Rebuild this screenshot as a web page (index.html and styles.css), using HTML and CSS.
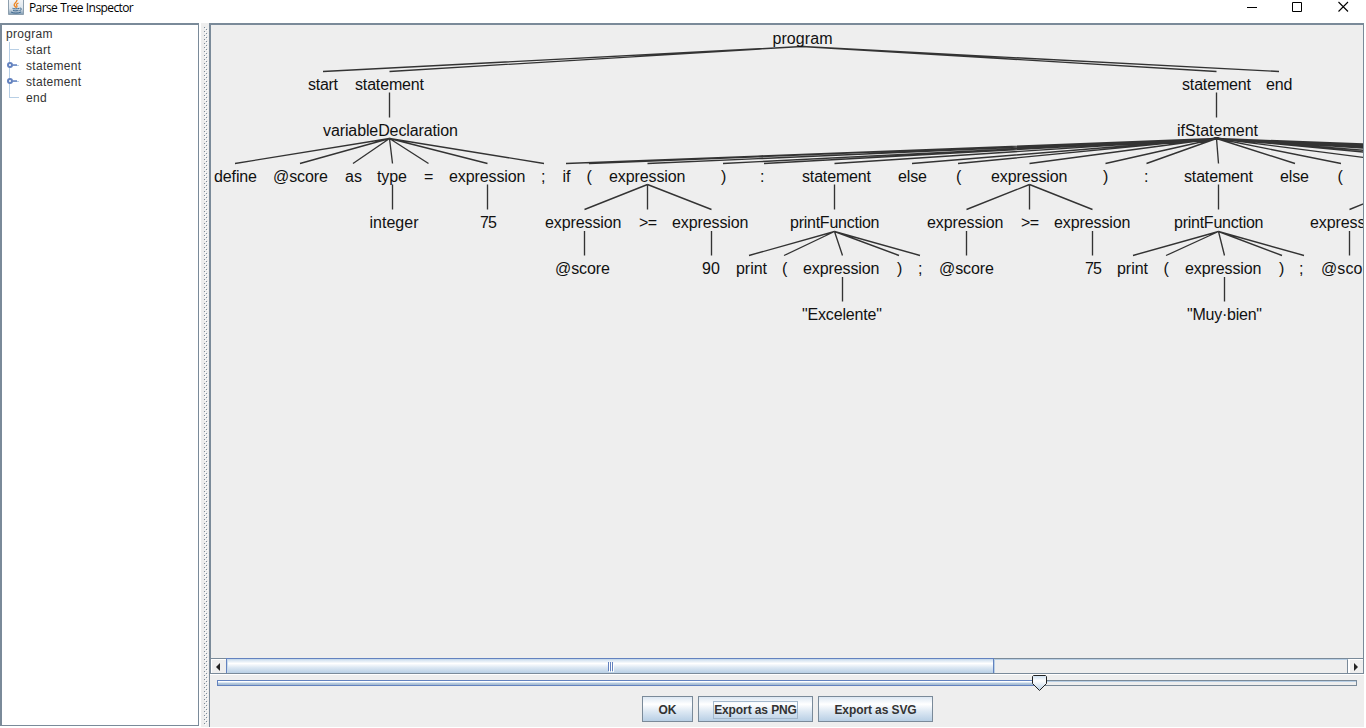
FILE: index.html
```html
<!DOCTYPE html>
<html lang="en">
<head>
<meta charset="utf-8">
<title>Parse Tree Inspector</title>
<link rel="stylesheet" href="styles.css">
</head>
<body>
<div class="window">
  <header class="titlebar">
    <svg class="app-icon" width="16" height="16" viewBox="0 0 16 16">
      <defs><linearGradient id="ig" x1="0" y1="0" x2="0" y2="1"><stop offset="0" stop-color="#f4f6f8"/><stop offset=".6" stop-color="#dde5ec"/><stop offset="1" stop-color="#7f9bb3"/></linearGradient></defs>
      <path d="M0.5 -1V14.5H15.5V-1z" fill="url(#ig)" stroke="#8d9fae"/>
      <path d="M9 0C9 2.500 5.500 3 6.200 5.200C6.500 6.200 7.500 6.500 7.600 7.600M10.500 3C8.500 3.800 8 4.500 8.800 5.500C9.400 6.400 8.800 7 8.400 7.600" fill="none" stroke="#ee8420" stroke-width="1.300"/>
      <path d="M4.500 8.300C5.500 9 9.500 9 11 8.300M5 10.200C6.500 11 9 11 10.500 10.200M3 12C5 13.500 10.500 13.500 13 12M11.500 8.300C14 7.500 14 10 11.500 10.500" fill="none" stroke="#40698f" stroke-width="1"/>
    </svg>
    <h1 class="title">Parse Tree Inspector</h1>
    <div class="controls">
      <svg width="11" height="12" viewBox="0 0 11 12"><path d="M1 7.500H11" stroke="#000"/></svg>
      <svg width="11" height="12" viewBox="0 0 11 12"><path d="M.5 2.500H9.500V11.500H.5z" fill="none" stroke="#000"/></svg>
      <svg width="11" height="12" viewBox="0 0 11 12"><path d="M.5 2L10 11.500M10 2L.5 11.500" stroke="#000" stroke-width="1.100"/></svg>
    </div>
  </header>
  <main class="split">
    <aside class="outline">
      <ul class="tree">
        <li class="root">program</li>
        <li class="leaf">start</li>
        <li class="leaf branch">statement</li>
        <li class="leaf branch">statement</li>
        <li class="leaf last">end</li>
      </ul>
    </aside>
    <svg class="divider" width="9" height="704">
      <defs><pattern id="dots" width="4" height="4" patternUnits="userSpaceOnUse">
        <path d="M0 0h1v1H0zM2 2h1v1H2z" fill="#7a8a99"/><path d="M1 1h1v1H1zM3 3h1v1H3z" fill="#fff"/>
      </pattern></defs>
      <rect width="9" height="704" fill="#eee"/>
      <rect width="4" height="698" fill="url(#dots)" transform="translate(3 4)"/>
    </svg>
    <section class="viewer">
      <div class="canvas">
        <svg class="graph" width="1152" height="633" viewBox="211 25 1152 633">
          <g class="edges">
            <path d="M802 46.500L323 71.500M802 46.500L389.500 71.500M802 46.500L1216.500 71.500M802 46.500L1279 71.500"/>
            <path d="M389.500 92.500V117.500M1216.500 92.500V117.500"/>
            <path d="M389.500 138.500L235 163.500M389.500 138.500L300 163.500M389.500 138.500L353 163.500M389.500 138.500L392.500 163.500M389.500 138.500L428.500 163.500M389.500 138.500L487.500 163.500M389.500 138.500L544 163.500"/>
            <path d="M1216.500 138.500L566 163.500M1216.500 138.500L589 163.500M1216.500 138.500L647.500 163.500M1216.500 138.500L723 163.500M1216.500 138.500L764 163.500M1216.500 138.500L834.500 163.500M1216.500 138.500L912 163.500M1216.500 138.500L958 163.500M1216.500 138.500L1029.500 163.500M1216.500 138.500L1105.500 163.500M1216.500 138.500L1146.500 163.500M1216.500 138.500L1218.500 163.500M1216.500 138.500L1295 163.500M1216.500 138.500L1341 163.500"/>
            <path d="M1216.500 138.500L1411 163.500M1216.500 138.500L1487 163.500M1216.500 138.500L1529 163.500M1216.500 138.500L1600 163.500M1216.500 138.500L1677 163.500M1216.500 138.500L1722 163.500M1216.500 138.500L1800 163.500M1216.500 138.500L1890 163.500"/>
            <path d="M392.500 184.500V209.500M487.500 184.500V209.500M647.500 184.500L584.500 209.500M647.500 184.500V209.500M647.500 184.500L711.500 209.500M834.500 184.500V209.500M1029.500 184.500L966.500 209.500M1029.500 184.500V209.500M1029.500 184.500L1092.500 209.500M1218.500 184.500V209.500M1411 184.500L1349.500 209.500"/>
            <path d="M584.500 231V255.500M711.500 231V255.500M966.500 231V255.500M1092.500 231V255.500M1349.500 231V255.500"/>
            <path d="M834.500 231.500L749 255.500M834.500 231.500L784 255.500M834.500 231.500L842.500 255.500M834.500 231.500L899 255.500M834.500 231.500L920 255.500M1218.500 231.500L1133 255.500M1218.500 231.500L1166 255.500M1218.500 231.500L1224.500 255.500M1218.500 231.500L1282 255.500M1218.500 231.500L1304 255.500"/>
            <path d="M842.500 277V301.500M1224.500 277V301.500"/>
          </g>
          <g class="labels">
            <text x="772.500" y="44" textLength="60">program</text>
            <text x="308" y="90" textLength="30">start</text>
            <text x="355" y="90" textLength="69">statement</text>
            <text x="1182" y="90" textLength="69">statement</text>
            <text x="1266" y="90" textLength="26.500">end</text>
            <text x="323" y="136" textLength="135">variableDeclaration</text>
            <text x="1177" y="136" textLength="81">ifStatement</text>
            <text x="214" y="182" textLength="43">define</text>
            <text x="273" y="182" textLength="55">@score</text>
            <text x="345" y="182" textLength="17">as</text>
            <text x="377" y="182" textLength="30">type</text>
            <text x="424" y="182">=</text>
            <text x="449" y="182" textLength="76.500">expression</text>
            <text x="541" y="182">;</text>
            <text x="562.500" y="182">if</text>
            <text x="586.500" y="182">(</text>
            <text x="609" y="182" textLength="76.500">expression</text>
            <text x="721" y="182">)</text>
            <text x="760" y="182">:</text>
            <text x="802" y="182" textLength="69">statement</text>
            <text x="898" y="182" textLength="29">else</text>
            <text x="956" y="182">(</text>
            <text x="991" y="182" textLength="76.500">expression</text>
            <text x="1103" y="182">)</text>
            <text x="1144" y="182">:</text>
            <text x="1184" y="182" textLength="69">statement</text>
            <text x="1280" y="182" textLength="29">else</text>
            <text x="1337.500" y="182">(</text>
            <text x="369.500" y="228" textLength="49">integer</text>
            <text x="480" y="228" textLength="17">75</text>
            <text x="545" y="228" textLength="76.500">expression</text>
            <text x="639" y="228" textLength="18">&gt;=</text>
            <text x="672" y="228" textLength="76.500">expression</text>
            <text x="790" y="228" textLength="89.500">printFunction</text>
            <text x="927" y="228" textLength="76.500">expression</text>
            <text x="1021" y="228" textLength="18">&gt;=</text>
            <text x="1054" y="228" textLength="76.500">expression</text>
            <text x="1174" y="228" textLength="89.500">printFunction</text>
            <text x="1310" y="228" textLength="76.500">expression</text>
            <text x="555" y="274" textLength="55">@score</text>
            <text x="702" y="274" textLength="18">90</text>
            <text x="736" y="274" textLength="31">print</text>
            <text x="782" y="274">(</text>
            <text x="803" y="274" textLength="76.500">expression</text>
            <text x="897" y="274">)</text>
            <text x="918" y="274">;</text>
            <text x="939" y="274" textLength="55">@score</text>
            <text x="1085" y="274" textLength="17">75</text>
            <text x="1117" y="274" textLength="31">print</text>
            <text x="1163.500" y="274">(</text>
            <text x="1185" y="274" textLength="76.500">expression</text>
            <text x="1279" y="274">)</text>
            <text x="1299" y="274">;</text>
            <text x="1321" y="274" textLength="56">@score</text>
            <text x="802" y="320" textLength="80">"Excelente"</text>
            <text x="1187" y="320" textLength="75">"Muy·bien"</text>
          </g>
        </svg>
        <div class="scrollbar">
          <span class="arrow"><svg width="4" height="8" viewBox="0 0 4 8"><path d="M4 0V8L0 4z" fill="#222"/></svg></span>
          <span class="thumb"><i></i><i></i><i></i></span>
          <span class="rest"></span>
          <span class="arrow right"><svg width="4" height="8" viewBox="0 0 4 8"><path d="M0 0V8L4 4z" fill="#222"/></svg></span>
        </div>
      </div>
      <div class="slider">
        <span class="filled"></span>
        <span class="empty"></span>
        <svg class="knob" width="15" height="17" viewBox="0 0 15 17">
          <defs><linearGradient id="kg" x1="0" y1="0" x2="0" y2="1"><stop offset="0" stop-color="#cddff0"/><stop offset=".35" stop-color="#fff"/><stop offset="1" stop-color="#b8cfe5"/></linearGradient></defs>
          <path d="M1.500 .5H13.500L14.500 1.500V8.500L7.500 15.500L.5 8.500V1.500z" fill="url(#kg)" stroke="#222"/>
        </svg>
      </div>
      <div class="buttons">
        <button class="btn ok">OK</button>
        <button class="btn"><span class="focus">Export as PNG</span></button>
        <button class="btn">Export as SVG</button>
      </div>
    </section>
  </main>
</div>
</body>
</html>
```
FILE: styles.css
```css
*, *::before, *::after { box-sizing: border-box; }
body { margin: 0; background: #fff; overflow: hidden; }
.window { width: 1366px; height: 728px; display: flex; flex-direction: column; font-family: "Liberation Sans", Arial, sans-serif; }
.titlebar { height: 23px; display: flex; align-items: flex-start; padding-left: 8px; }
.app-icon { display: block; }
.title { margin: 0 0 0 5px; font: 400 12px/16px "Open Sans", "Noto Sans", sans-serif; letter-spacing: -0.6px; word-spacing: 0.5px; color: #000; white-space: nowrap; }
.controls { margin-left: auto; display: flex; gap: 35px; padding-right: 17px; }
.controls svg { display: block; }

.split { flex: 1; display: flex; min-height: 0; }
.outline { width: 199px; height: 703px; border: solid #7a8a99; border-width: 2px 1px 1px 2px; margin-right: 2px; }
.tree { list-style: none; margin: 0; padding: 1px 0 0 4px; font-size: 12px; line-height: 16px; color: #333; }
.tree li { height: 16px; white-space: nowrap; letter-spacing: 0.3px; }
.leaf { position: relative; padding-left: 20px; }
.leaf::before { content: ""; position: absolute; left: 3px; top: 0; width: 10px; height: 16px; border-left: 1px solid #b8cfe5; background: linear-gradient(#b8cfe5, #b8cfe5) 0 7px / 10px 1px no-repeat; }
.last::before { height: 8px; }
.branch::after { content: ""; position: absolute; left: 1px; top: 4px; width: 6px; height: 6px; border: 2px solid #6382bf; border-radius: 3px; background: #fff; box-shadow: 4px 0 0 -2px #6382bf, 6px 0 0 -2px #6382bf; }

.divider { display: block; width: 9px; flex: none; margin-right: -1px; }
.viewer { width: 1155px; height: 704px; background: linear-gradient(90deg, #eee 1153px, #fff 1153px) 0 0 / 100% 650px no-repeat #eee; border-left: 1px solid #7a8a99; display: flex; flex-direction: column; }
.canvas { border: solid #7a8a99; border-width: 2px 1px 0 1px; width: 1154px; height: 651px; }
.graph { display: block; overflow: hidden; }
.edges path { fill: none; stroke: #333; stroke-width: 1.350; }
.labels text { font: 16px "Liberation Sans", Arial, sans-serif; fill: #111; }
.scrollbar { display: flex; height: 16px; border: solid #7a8a99; border-width: 1px 0; }
.arrow { width: 15px; display: flex; align-items: center; justify-content: center; border-top: 1px solid #fff; border-left: 1px solid #fff; padding-right: 3px; }
.arrow svg { flex: none; }
.arrow.right { border-left-width: 2px; padding-right: 2px; }
.thumb { width: 768px; margin-top: -1px; border: solid #6382bf; border-width: 1px 1px 0; display: flex; gap: 1px; align-items: center; justify-content: center; background: linear-gradient(#c8dbed, #fff 32%, #dde8f3 60%, #b8cfe5); box-shadow: inset 1px 1px #c8dbed; }
.thumb i { width: 1px; height: 9px; background: #6382bf; box-shadow: 1px 1px #fff; }
.rest { flex: 1; border-top: 1px solid #b8cfe5; border-left: 1px solid #b8cfe5; border-right: 1px solid #7a8a99; }
.slider { position: relative; display: flex; margin: 0 7px 0 7px; padding-top: 6px; height: 22px; }
.slider::before { content: ""; position: absolute; left: -7px; right: -7px; top: 0; height: 1px; background: #fff; }
.filled { width: 822px; height: 6px; border: 1px solid #6382bf; background: linear-gradient(#fff, #fff 25%, #b8cfe5 50%, #a3b8cc); }
.empty { flex: 1; height: 6px; border: 1px solid #7a8a99; border-left: 0; box-shadow: inset 0 1px #b8cfe5; }
.knob { position: absolute; left: 815px; top: 1px; }
.buttons { display: flex; gap: 5px; justify-content: center; padding-left: 1px; }
.btn { width: 115px; height: 26px; padding: 2px 0 0; border: 1px solid #7a8a99; border-radius: 0; background: linear-gradient(#dde8f3, #fff 30%, #dde8f3 60%, #b8cfe5); font: bold 12px/16px "Liberation Sans", Arial, sans-serif; letter-spacing: -0.1px; color: #333; white-space: nowrap; }
.btn.ok { width: 51px; }
.focus { display: inline-block; border: 1px solid #a3b8cc; }
```
